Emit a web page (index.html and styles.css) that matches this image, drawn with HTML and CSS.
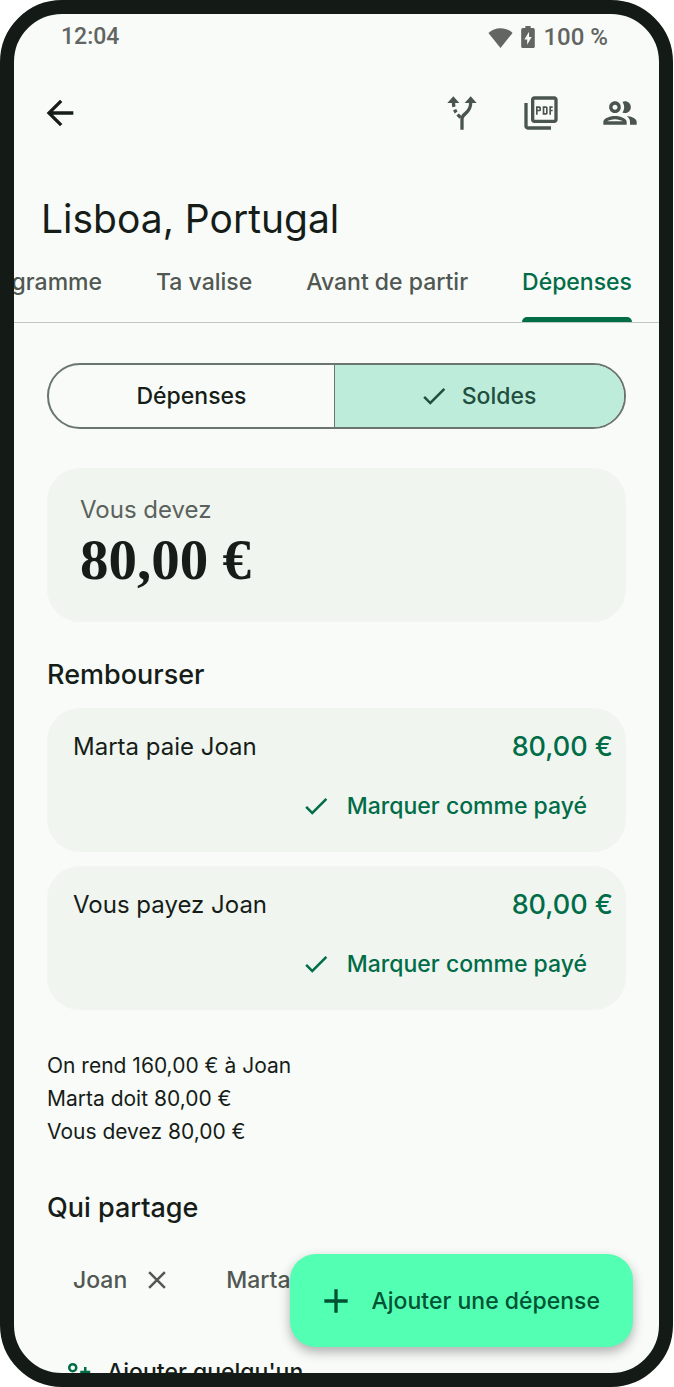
FILE: index.html
```html
<!DOCTYPE html>
<html lang="fr">

<head>
    <meta charset="UTF-8">
    <meta name="viewport" content="width=device-width, initial-scale=1.0">
    <title>Lisboa, Portugal - Dépenses</title>
    <link rel="stylesheet" href="styles.css">
</head>

<body>
    <div class="phone">
        <div class="status-bar">
            <span>12:04</span>
            <div class="status-icons">
                <svg class="wifi" viewBox="0 0 24 20"><path d="M12 20 .4 5.600C3.600 2.500 7.600 1 12 1s8.400 1.500 11.600 4.600z"/></svg>
                <svg class="battery" viewBox="0 0 13 21"><path fill-rule="evenodd" d="M4 0h5v2h2.500Q13 2 13 3.500v16q0 1.500-1.500 1.500h-10Q0 21 0 19.500v-16Q0 2 1.500 2H4zM7.500 5.500 3 13h2.700v5L10 10.500H7.500z"/></svg>
                <span>100 %</span>
            </div>
        </div>

        <header class="toolbar">
            <button class="icon-btn back" aria-label="Retour">
                <svg viewBox="0 0 24 24"><path d="M20 11H7.830l5.590-5.590L12 4l-8 8 8 8 1.410-1.410L7.830 13H20z"/></svg>
            </button>
            <div class="actions">
                <button class="icon-btn" aria-label="Itinéraire">
                    <svg viewBox="0 0 24 24">
                        <path d="M6.800 2 3.200 6h7.200zM17.200 2l-3.600 4h7.200z"/>
                        <path class="line" d="M12 22v-6.500c0-3.500 5.200-3 5.200-9.500"/>
                        <path class="line" stroke-dasharray="2.300 1.700 2 1.500 2.500" d="M6.900 6c.1 4.500 2 6.700 4.600 9"/>
                    </svg>
                </button>
                <button class="icon-btn" aria-label="Exporter en PDF">
                    <svg viewBox="0 0 24 24"><path d="M20 2H8c-1.100 0-2 .9-2 2v12c0 1.100.9 2 2 2h12c1.100 0 2-.9 2-2V4c0-1.100-.9-2-2-2zm0 14H8V4h12v12zM4 6H2v14c0 1.100.9 2 2 2h14v-2H4V6zm12 6V9c0-.55-.45-1-1-1h-2v5h2c.55 0 1-.45 1-1zm-2-3h1v3h-1V9zm4 2h1v-1h-1V9h1V8h-2v5h1zm-8 0h1c.55 0 1-.45 1-1V9c0-.55-.45-1-1-1H9v5h1v-2zm0-2h1v1h-1V9z"/></svg>
                </button>
                <button class="icon-btn" aria-label="Participants">
                    <svg viewBox="0 0 24 24"><path d="M9 13.750c-2.340 0-7 1.170-7 3.500V19h14v-1.750c0-2.330-4.660-3.500-7-3.500zM4.340 17c.84-.58 2.870-1.250 4.660-1.250s3.820.67 4.660 1.250H4.340zM9 12c1.930 0 3.500-1.570 3.500-3.500S10.930 5 9 5 5.500 6.570 5.500 8.500 7.070 12 9 12zm0-5c.83 0 1.500.67 1.500 1.500S9.830 10 9 10s-1.500-.67-1.500-1.500S8.170 7 9 7zm7.040 6.810c1.160.84 1.960 1.960 1.960 3.440V19h4v-1.750c0-2.020-3.500-3.170-5.960-3.440zM15 12c1.930 0 3.500-1.570 3.500-3.500S16.930 5 15 5c-.54 0-1.040.13-1.500.35.63.89 1 1.980 1 3.150s-.37 2.260-1 3.150c.46.22.96.35 1.500.35z"/></svg>
                </button>
            </div>
        </header>

        <h1>Lisboa, Portugal</h1>

        <nav class="tabs">
            <a href="#programme">Programme</a>
            <a href="#valise">Ta valise</a>
            <a href="#avant">Avant de partir</a>
            <a href="#depenses" class="active">Dépenses</a>
        </nav>

        <main>
            <div class="segmented">
                <button>Dépenses</button>
                <button class="selected">
                    <svg class="small-icon" viewBox="0 0 24 24"><path d="M9 16.170 4.830 12l-1.420 1.410L9 19 21 7l-1.410-1.410z"/></svg>
                    Soldes
                </button>
            </div>

            <section class="card total">
                <p>Vous devez</p>
                <strong>80,00 €</strong>
            </section>

            <h2>Rembourser</h2>
            <section class="card payment">
                <div class="row"><span>Marta paie Joan</span><b>80,00 €</b></div>
                <button>
                    <svg class="small-icon" viewBox="0 0 24 24"><path d="M9 16.170 4.830 12l-1.420 1.410L9 19 21 7l-1.410-1.410z"/></svg>
                    Marquer comme payé
                </button>
            </section>
            <section class="card payment">
                <div class="row"><span>Vous payez Joan</span><b>80,00 €</b></div>
                <button>
                    <svg class="small-icon" viewBox="0 0 24 24"><path d="M9 16.170 4.830 12l-1.420 1.410L9 19 21 7l-1.410-1.410z"/></svg>
                    Marquer comme payé
                </button>
            </section>

            <div class="summary">
                <p>On rend 160,00 € à Joan</p>
                <p>Marta doit 80,00 €</p>
                <p>Vous devez 80,00 €</p>
            </div>

            <h2>Qui partage</h2>
            <div class="people">
                <div class="chip">
                    <span>Joan</span>
                    <button aria-label="Retirer Joan">
                        <svg class="small-icon" viewBox="0 0 24 24"><path d="M19 6.410 17.590 5 12 10.590 6.410 5 5 6.410 10.590 12 5 17.590 6.410 19 12 13.410 17.590 19 19 17.590 13.410 12z"/></svg>
                    </button>
                </div>
                <div class="chip"><span>Marta</span></div>
            </div>
            <button class="add-person">
                <svg class="small-icon" viewBox="0 0 24 24">
                    <circle class="line" cx="7" cy="8.500" r="2.800"/>
                    <path class="line" d="M13 12h8M17 8v8M1 20c0-6 12-6 12 0z"/>
                </svg>
                Ajouter quelqu'un
            </button>
        </main>

        <button class="fab">
            <svg viewBox="0 0 24 24"><path d="M19 13h-6v6h-2v-6H5v-2h6V5h2v6h6z"/></svg>
            Ajouter une dépense
        </button>
    </div>
</body>

</html>
```

FILE: styles.css
```css
* {
    box-sizing: border-box;
}

body {
    margin: 0;
    background: #fff;
    color: #161d19;
    font-family: Inter, "Liberation Sans", sans-serif;
    font-size: 23px;
    line-height: 32px;
}

h1,
h2,
p {
    margin: 0;
}

button {
    display: flex;
    align-items: center;
    justify-content: center;
    padding: 0;
    border: none;
    background: none;
    color: inherit;
    font: inherit;
    font-weight: 500;
    cursor: pointer;
}

svg {
    display: block;
    flex: none;
    fill: currentColor;
}

.line {
    fill: none;
    stroke: currentColor;
    stroke-width: 2;
}

.phone {
    position: relative;
    display: flex;
    flex-direction: column;
    height: 100vh;
    margin-right: 1px;
    overflow: hidden;
    border: 14px solid #141b17;
    border-radius: 62px;
    background: #f8fbf7;
}

.status-bar {
    display: flex;
    justify-content: space-between;
    padding: 7px 51px 0 47px;
    color: #626562;
    font-family: Roboto, sans-serif;
    font-weight: 500;
}

.status-icons {
    display: flex;
    align-items: center;
    gap: 8px;
}

.status-icons span {
    font-size: 24px;
}

.wifi {
    width: 25px;
    height: 21px;
}

.battery {
    width: 14px;
    height: 22px;
}

.toolbar {
    display: flex;
    justify-content: space-between;
    padding: 20px 0 0 6px;
    color: #4a554f;
}

.actions {
    display: flex;
}

.icon-btn {
    width: 79px;
    height: 80px;
}

.icon-btn svg {
    width: 40px;
    height: 40px;
}

.back {
    color: #161d19;
}

h1 {
    padding: 42px 27px 0;
    font-size: 39px;
    font-weight: 400;
    line-height: 48px;
}

.tabs {
    display: flex;
    flex: none;
    justify-content: flex-end;
    overflow: hidden;
    border-bottom: 1px solid #bfc9c2;
}

.tabs a {
    flex: none;
    margin: 0 27px;
    padding: 23px 0 24px;
    color: #515753;
    font-weight: 500;
    text-decoration: none;
}

.tabs .active {
    position: relative;
    color: #006c48;
}

.tabs .active::after {
    content: "";
    position: absolute;
    right: 0;
    bottom: 0;
    left: 0;
    height: 5px;
    border-radius: 5px 5px 0 0;
    background: #006c48;
}

main {
    padding: 40px 33px 0;
}

.segmented {
    display: flex;
    overflow: hidden;
    border: 2px solid #6b756f;
    border-radius: 33px;
}

.segmented button {
    flex: 1;
    gap: 13px;
    height: 62px;
}

.segmented .selected {
    padding-right: 4px;
    border-left: 1px solid #6b756f;
    background: #bdecdb;
    color: #224e3f;
}

.small-icon {
    width: 30px;
    height: 30px;
}

.card {
    border-radius: 33px;
    background: #f0f5ef;
}

.total {
    margin-top: 39px;
    padding: 26px 33px 28px;
}

.total p {
    color: #5b625d;
    font-size: 24px;
}

.total strong {
    display: block;
    font-family: "Liberation Serif", serif;
    font-size: 57px;
    line-height: 68px;
}

h2 {
    margin-top: 37px;
    font-size: 27px;
    font-weight: 500;
}

.payment {
    margin-top: 14px;
    padding: 23px 13px 13px 26px;
}

h2 + .payment {
    margin-top: 17px;
}

.row {
    display: flex;
    justify-content: space-between;
    margin-bottom: 10px;
    font-size: 24px;
}

.row b {
    color: #006c48;
    font-size: 27px;
    font-weight: 500;
}

.payment button {
    gap: 16px;
    height: 66px;
    margin-left: auto;
    padding: 0 26px;
    color: #006c48;
}

.summary {
    margin-top: 39px;
    font-size: 21px;
    line-height: 33px;
}

.summary + h2 {
    margin-top: 44px;
}

.people {
    display: flex;
    gap: 54px;
    margin-top: 30px;
    padding-left: 26px;
    color: #515753;
    font-weight: 500;
}

.chip {
    display: flex;
    height: 52px;
    align-items: center;
    gap: 15px;
}

.add-person {
    gap: 13px;
    height: 66px;
    margin-top: 33px;
    padding-left: 17px;
}

.add-person svg {
    color: #006c48;
}

.fab {
    position: absolute;
    right: 26px;
    bottom: 26px;
    gap: 16px;
    height: 93px;
    padding: 0 33px 0 26px;
    border-radius: 26px;
    background: #53ffb2;
    box-shadow: 0 5px 12px rgba(0, 0, 0, 0.3);
    color: #005235;
}

.fab svg {
    width: 40px;
    height: 40px;
}
```
